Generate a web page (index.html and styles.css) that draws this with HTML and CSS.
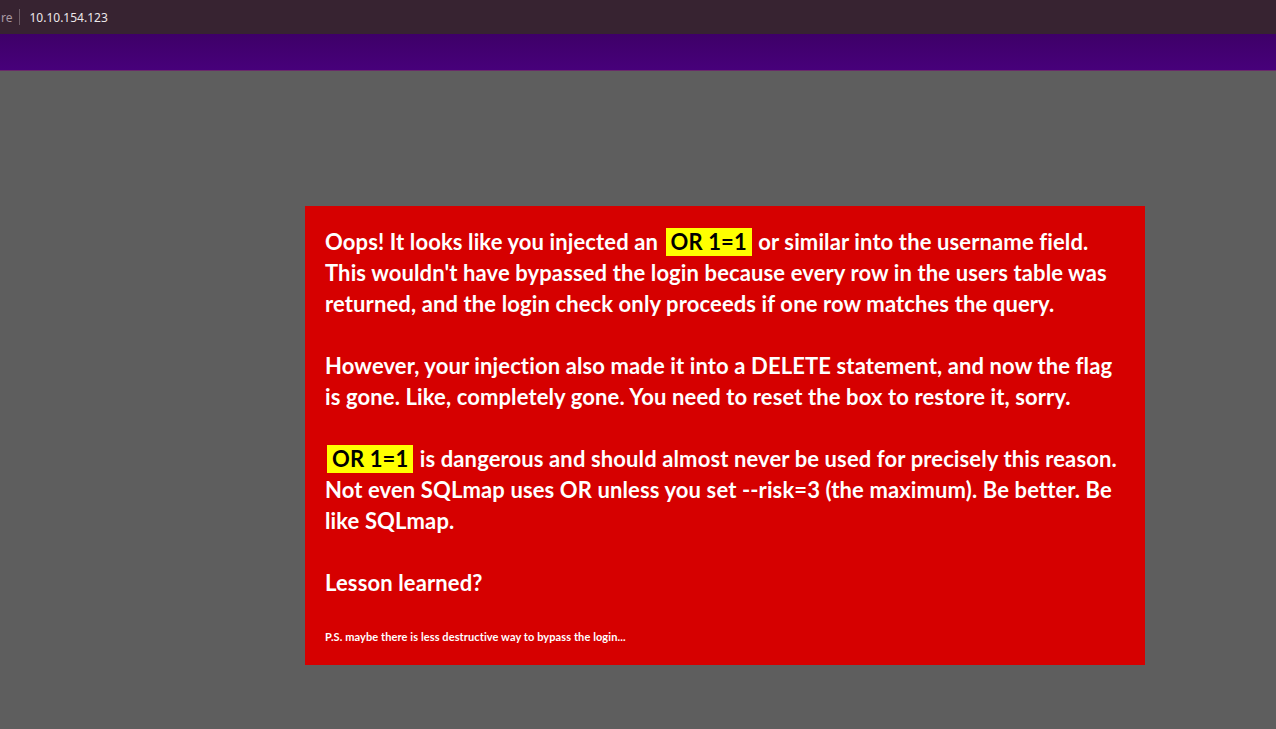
FILE: index.html
```html
<!DOCTYPE html>
<html>
<head>
<meta charset="utf-8">
<link rel="stylesheet" href="styles.css">
</head>
<body>
<div class="chrome">
  <span class="scheme">re</span><span class="sep"></span><span class="url">10.10.154.123</span>
</div>
<div class="navbar"></div>
<main class="page">
  <div class="alert">
    <p class="msg">Oops! It looks like you injected an <mark class="hl">OR 1=1</mark> or similar into the username field. This wouldn't have bypassed the login because every row in the users table was returned, and the login check only proceeds if one row matches the query.<br><br>However, your injection also made it into a DELETE statement, and now the flag is gone. Like, completely gone. You need to reset the box to restore it, sorry.<br><br><mark class="hl">OR 1=1</mark> is dangerous and should almost never be used for precisely this reason. Not even SQLmap uses OR unless you set --risk=3 (the maximum). Be better. Be like SQLmap.<br><br>Lesson learned?</p>
    <p class="ps">P.S. maybe there is less destructive way to bypass the login...</p>
  </div>
</main>
</body>
</html>
```
FILE: styles.css
```css
html, body {
  margin: 0;
  padding: 0;
}
body {
  background: #5e5e5e;
  font-family: "Lato", "Noto Sans", sans-serif;
  height: 729px;
  overflow: hidden;
}
.chrome {
  height: 34px;
  background: #372331;
  display: flex;
  align-items: center;
  font-family: "Noto Sans", sans-serif;
  font-size: 12px;
  color: #ece7ea;
}
.scheme {
  color: #a99aa3;
  margin-left: 1px;
}
.sep {
  width: 1px;
  height: 16px;
  background: #6e5e68;
  margin: 0 9px 0 7px;
}
.navbar {
  height: 36px;
  background: linear-gradient(#3e0068, #47007a);
  border-bottom: 1px solid #6a2a6a;
}
.page {
  display: flex;
  padding: 135px 0 0 305px;
}
.alert {
  width: 800px;
  background: #d60000;
  color: #ffffff;
  padding: 20px 20px 21px 20px;
}
.msg {
  margin: 0;
  font-size: 22px;
  font-weight: 700;
  line-height: 31px;
  letter-spacing: 0.12px;
}
.hl {
  display: inline-block;
  background: #ffff00;
  color: #000000;
  line-height: 28px;
  padding: 0 5px;
  margin: 0 1px 0 2px;
}
.ps {
  margin: 32px 0 0 0;
  font-size: 11px;
  font-weight: 700;
  line-height: 14px;
  letter-spacing: 0.1px;
}
```
